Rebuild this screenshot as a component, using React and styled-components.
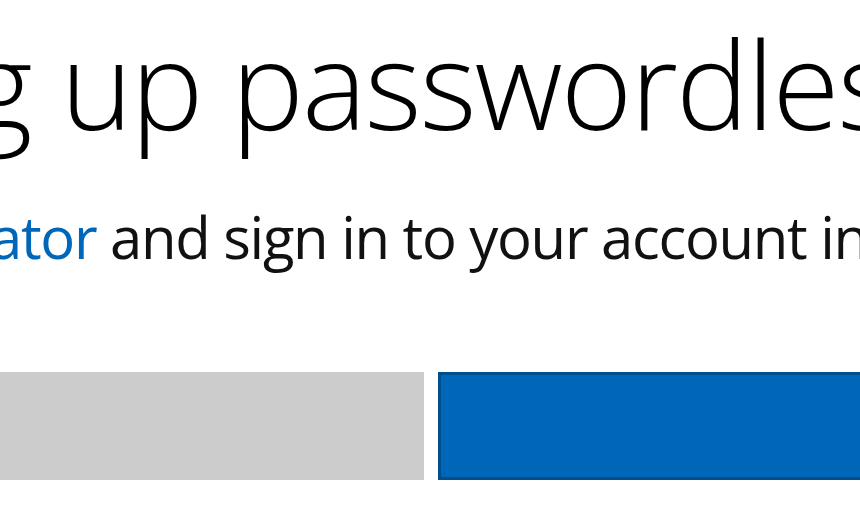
import styled, { createGlobalStyle } from "styled-components"

const GlobalStyle = createGlobalStyle`
    html, body {
        margin: 0;
        padding: 0;
        background: #ffffff;
    }
    body {
        width: 860px;
        height: 520px;
        overflow: hidden;
        font-family: "Open Sans", "Noto Sans", sans-serif;
    }
`

const Page = styled.div`
    width: 860px;
    height: 520px;
    overflow: hidden;
    padding-top: 22px;
    box-sizing: border-box;
`

const Title = styled.h1`
    margin: 0 0 0 -334px;
    font-size: 122px;
    line-height: 1;
    font-weight: 300;
    color: #000000;
    white-space: nowrap;
    letter-spacing: -1.9px;
`

const Description = styled.p`
    margin: 64px 0 0 -258px;
    font-size: 58px;
    line-height: 1;
    font-weight: 400;
    color: #111111;
    white-space: nowrap;
    letter-spacing: -1.3px;
`

const Link = styled.a`
    color: #0067b8;
    text-decoration: none;
`

const Actions = styled.div`
    display: flex;
    gap: 14px;
    margin: 106px 0 0 -76px;
`

const Button = styled.button`
    flex: none;
    width: 500px;
    height: 108px;
    box-sizing: border-box;
    border: 3px solid ${(p) => (p.primary ? "#004e8c" : "#cccccc")};
    background-color: ${(p) => (p.primary ? "#0067b8" : "#cccccc")};
    color: ${(p) => (p.primary ? "#ffffff" : "#000000")};
    font-family: inherit;
    font-size: 58px;
    padding: 0;
    cursor: pointer;
`

const App = () => {
  return (
    <Page>
        <GlobalStyle />
        <Title>
            Setting up passwordless sign-in
        </Title>
        <Description>
            <Link href="#">Authenticator</Link> and sign in to your account in the app
        </Description>
        <Actions>
            <Button aria-label="Back" />
            <Button primary aria-label="Next" />
        </Actions>
    </Page>
  )
}

export default App
